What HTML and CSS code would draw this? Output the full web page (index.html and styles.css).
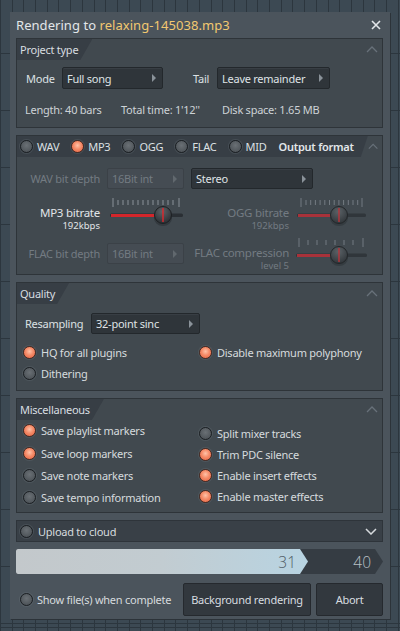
FILE: index.html
```html
<!DOCTYPE html>
<html>
<head>
<meta charset="utf-8">
<link rel="stylesheet" href="styles.css">
</head>
<body>
<div class="win">
  <div class="titlebar">
    <span class="title">Rendering to <span class="fname">relaxing-145038.mp3</span></span>
    <svg class="close" width="10" height="10" viewBox="0 0 10 10"><path d="M1 1L9 9M9 1L1 9" stroke="#e3e7ea" stroke-width="1.6" fill="none"/></svg>
  </div>

  <section class="panel p1">
    <div class="phead">
      <div class="tab">Project type</div>
      <svg class="caret" width="12" height="7" viewBox="0 0 12 7"><path d="M1 6L6 1L11 6" stroke="#68717a" stroke-width="1.3" fill="none"/></svg>
    </div>
    <div class="mode-row">
      <span class="lbl mode">Mode</span>
      <div class="dd dd-mode">Full song<i class="arr"></i></div>
      <span class="lbl tail">Tail</span>
      <div class="dd dd-tail">Leave remainder<i class="arr"></i></div>
    </div>
    <div class="info-row">
      <span class="i1">Length: 40 bars</span>
      <span class="i2">Total time: 1'12''</span>
      <span class="i3">Disk space: 1.65 MB</span>
    </div>
  </section>

  <section class="panel p2">
    <div class="phead">
      <div class="tab tab-wide">
        <span class="fmt"><i class="radio"></i>WAV</span>
        <span class="fmt"><i class="radio on"></i>MP3</span>
        <span class="fmt"><i class="radio"></i>OGG</span>
        <span class="fmt"><i class="radio"></i>FLAC</span>
        <span class="fmt"><i class="radio"></i>MID</span>
        <span class="fmt-title">Output format</span>
      </div>
      <svg class="caret" width="12" height="7" viewBox="0 0 12 7"><path d="M1 6L6 1L11 6" stroke="#68717a" stroke-width="1.3" fill="none"/></svg>
    </div>
    <div class="fgrid">
      <div class="flbl dis r1">WAV bit depth</div>
      <div class="dd dis r1 c2">16Bit int<i class="arr"></i></div>
      <div class="dd stereo r1">Stereo<i class="arr"></i></div>

      <div class="flbl two r2"><span class="big">MP3 bitrate</span><span class="small">192kbps</span></div>
      <div class="r2 c2 sl">
        <svg width="77" height="32" viewBox="0 0 77 32">
          <path d="M6 3V12M72 3V12M11 5V10M16 5V10M21 5V10M26 5V10M31 5V10M36 5V10M41 5V10M46 5V10M51 5V10M56 5V10M61 5V10M66 5V10" stroke="#8a9299" stroke-width="1"/>
          <rect x="3" y="18.5" width="73" height="3.5" rx="1.5" fill="#2a2f34"/>
          <rect x="4" y="19" width="48" height="3" fill="#d3262b"/>
          <ellipse cx="56" cy="23" rx="9" ry="8" fill="#2a2f33" opacity="0.6"/>
          <circle cx="56" cy="20" r="8.5" fill="url(#kn)" stroke="#1d2023" stroke-width="1"/>
          <path d="M56 13V27" stroke="#e0262c" stroke-width="1.4"/>
          <defs><radialGradient id="kn" cx="0.45" cy="0.3" r="0.8"><stop offset="0" stop-color="#5c6368"/><stop offset="1" stop-color="#24282c"/></radialGradient></defs>
        </svg>
      </div>
      <div class="flbl two dis r2 c3"><span class="big">OGG bitrate</span><span class="small">192kbps</span></div>
      <div class="r2 c4 sl">
        <svg width="71" height="32" viewBox="0 0 71 32">
          <path d="M5 3V12M66 3V12M10 5V10M14.7 5V10M19.4 5V10M24.1 5V10M28.8 5V10M33.5 5V10M38.2 5V10M42.9 5V10M47.6 5V10M52.3 5V10M57 5V10M61.7 5V10" stroke="#737b82" stroke-width="1"/>
          <rect x="1" y="18.5" width="69" height="3.5" rx="1.5" fill="#30363b"/>
          <rect x="2" y="19" width="37" height="3" fill="#a8323a"/>
          <ellipse cx="43" cy="23" rx="9" ry="8" fill="#2a2f33" opacity="0.5"/>
          <circle cx="43" cy="20" r="8.5" fill="url(#kn2)" stroke="#23272a" stroke-width="1"/>
          <path d="M43 13V27" stroke="#b8343b" stroke-width="1.4"/>
          <defs><radialGradient id="kn2" cx="0.45" cy="0.3" r="0.8"><stop offset="0" stop-color="#5b6267"/><stop offset="1" stop-color="#2b3034"/></radialGradient></defs>
        </svg>
      </div>

      <div class="flbl dis r3">FLAC bit depth</div>
      <div class="dd dis r3 c2">16Bit int<i class="arr"></i></div>
      <div class="flbl two dis r3 c3 cmp"><span class="big">FLAC compression</span><span class="small">level 5</span></div>
      <div class="r3 c4 sl sl3">
        <svg width="71" height="32" viewBox="0 0 71 32">
          <path d="M3 3V12M67 3V12M12 5V10M21 5V10M30 5V10M39 5V10M48 5V10M57 5V10" stroke="#737b82" stroke-width="1"/>
          <rect x="0" y="18.5" width="71" height="3.5" rx="1.5" fill="#30363b"/>
          <rect x="1" y="19" width="38" height="3" fill="#a8323a"/>
          <ellipse cx="43" cy="23" rx="9" ry="8" fill="#2a2f33" opacity="0.5"/>
          <circle cx="43" cy="20" r="8.5" fill="url(#kn3)" stroke="#23272a" stroke-width="1"/>
          <path d="M43 13V27" stroke="#b8343b" stroke-width="1.4"/>
          <defs><radialGradient id="kn3" cx="0.45" cy="0.3" r="0.8"><stop offset="0" stop-color="#5b6267"/><stop offset="1" stop-color="#2b3034"/></radialGradient></defs>
        </svg>
      </div>
    </div>
  </section>

  <section class="panel p3">
    <div class="phead">
      <div class="tab">Quality</div>
      <svg class="caret" width="12" height="7" viewBox="0 0 12 7"><path d="M1 6L6 1L11 6" stroke="#68717a" stroke-width="1.3" fill="none"/></svg>
    </div>
    <div class="res-row">
      <span class="lbl res">Resampling</span>
      <div class="dd dd-res">32-point sinc<i class="arr"></i></div>
    </div>
    <div class="opts q">
      <span class="opt"><i class="radio on"></i>HQ for all plugins</span>
      <span class="opt"><i class="radio on"></i>Disable maximum polyphony</span>
      <span class="opt"><i class="radio"></i>Dithering</span>
    </div>
  </section>

  <section class="panel p4">
    <div class="phead">
      <div class="tab">Miscellaneous</div>
      <svg class="caret" width="12" height="7" viewBox="0 0 12 7"><path d="M1 6L6 1L11 6" stroke="#68717a" stroke-width="1.3" fill="none"/></svg>
    </div>
    <div class="misc">
      <div class="col left">
        <span class="opt"><i class="radio on"></i>Save playlist markers</span>
        <span class="opt"><i class="radio on"></i>Save loop markers</span>
        <span class="opt"><i class="radio"></i>Save note markers</span>
        <span class="opt"><i class="radio"></i>Save tempo information</span>
      </div>
      <div class="col right">
        <span class="opt"><i class="radio"></i>Split mixer tracks</span>
        <span class="opt"><i class="radio on"></i>Trim PDC silence</span>
        <span class="opt"><i class="radio on"></i>Enable insert effects</span>
        <span class="opt"><i class="radio on"></i>Enable master effects</span>
      </div>
    </div>
  </section>

  <div class="cloud">
    <span class="opt"><i class="radio"></i>Upload to cloud</span>
    <svg class="chev" width="12" height="7" viewBox="0 0 12 7"><path d="M1 1L6 6L11 1" stroke="#d6dadd" stroke-width="1.5" fill="none"/></svg>
  </div>

  <div class="progress">
    <div class="fill"><span>31</span></div>
    <span class="total">40</span>
  </div>

  <div class="bottom">
    <span class="opt show"><i class="radio"></i>Show file(s) when complete</span>
    <div class="btn bg">Background rendering</div>
    <div class="btn abort">Abort</div>
  </div>
</div>
</body>
</html>
```

FILE: styles.css
```css
* { box-sizing: border-box; }
html, body { margin: 0; padding: 0; }
body {
  width: 400px;
  height: 631px;
  overflow: hidden;
  font-family: "Noto Sans", "DejaVu Sans", sans-serif;
  font-size: 11px;
  letter-spacing: -0.25px;
  color: #d6dbde;
  background-color: #3c4953;
  background-image:
    repeating-linear-gradient(90deg, #2c363e 0 1px, transparent 1px 11.7px),
    repeating-linear-gradient(180deg, #2c363e 0 1px, transparent 1px 57px);
  background-position: 0 0, 0 -4px;
  padding-top: 12px;
  padding-left: 10px;
}
.win {
  width: 380px;
  height: 607px;
  background: #4b545c;
  box-shadow: 1px 1px 0 #2c3339;
  padding: 0 7px 0 6px;
}
.titlebar {
  height: 26px;
  display: flex;
  align-items: center;
  justify-content: space-between;
}
.title { font-size: 13px; color: #e2e6e9; letter-spacing: 0.05px; }
.fname { color: #f2c870; }
.close { margin-right: 2px; }

.panel {
  background: #41494f;
  border: 1px solid #2e3439;
  margin-bottom: 7px;
}
.phead {
  height: 21px;
  display: flex;
  align-items: center;
  justify-content: space-between;
}
.tab {
  height: 21px;
  background: #373e45;
  display: flex;
  align-items: center;
  padding: 0 14px 0 3px;
  color: #d8dde0;
  clip-path: polygon(0 0, 100% 0, calc(100% - 12px) 100%, 0 100%);
}
.caret { margin-right: 4px; }

.p1 { height: 90px; }
.lbl { color: #dde1e4; }
.mode-row {
  display: flex;
  align-items: center;
  height: 22px;
  margin-top: 7px;
  padding-left: 9px;
}
.mode { width: 36px; }
.dd {
  height: 22px;
  background: #2f353a;
  border: 1px solid #23282c;
  border-radius: 2px;
  display: flex;
  align-items: center;
  justify-content: space-between;
  padding: 0 6px 0 4px;
  color: #dfe3e6;
  box-shadow: inset 0 1px 0 #383e44;
}
.arr {
  width: 0; height: 0;
  border-left: 4px solid #8a9299;
  border-top: 4px solid transparent;
  border-bottom: 4px solid transparent;
}
.dd-mode { width: 101px; }
.tail { margin-left: 30px; width: 24px; }
.dd-tail { width: 113px; }
.info-row {
  height: 16px;
  margin-top: 12px;
  display: flex;
  align-items: center;
  color: #cdd2d6;
  padding-left: 8px;
}
.i1 { width: 96px; }
.i2 { width: 101px; }

.p2 { height: 140px; }
.tab-wide {
  width: 355px;
  padding-left: 3px;
  gap: 12px;
  clip-path: polygon(0 0, 100% 0, calc(100% - 7px) 100%, 0 100%);
}
.fmt { display: flex; align-items: center; gap: 4px; color: #dce0e3; }
.fmt-title { font-weight: 600; color: #e3e7ea; white-space: nowrap; }

.radio {
  display: inline-block;
  width: 13px;
  height: 13px;
  border-radius: 50%;
  border: 1px solid #1c2024;
  background: radial-gradient(circle at 50% 40%, #6a7075 0, #50565b 70%, #464c51 100%);
  box-shadow: 0 0 0 1px rgba(120,128,134,0.25);
  flex: none;
}
.radio.on {
  border-color: #4a2a22;
  background: radial-gradient(circle at 50% 40%, #ffc2a8 0, #f58b68 45%, #e2603f 100%);
}

.fgrid {
  display: grid;
  grid-template-columns: 83px 77px 98px 71px;
  grid-template-rows: 21px 42px 28px;
  column-gap: 7px;
  row-gap: 6px;
  margin-top: 11px;
}
.r1 { grid-row: 1; }
.r2 { grid-row: 2; }
.r3 { grid-row: 3; }
.c2 { grid-column: 2; }
.c3 { grid-column: 3; }
.c4 { grid-column: 4; }
.flbl {
  grid-column: 1;
  text-align: right;
  color: #e1e5e8;
  display: flex;
  align-items: center;
  justify-content: flex-end;
  height: 21px;
  white-space: nowrap;
}
.flbl.c3 { grid-column: 3; }
.flbl.dis, .dd.dis { color: #737b82; }
.dd.dis {
  background: #454c53;
  border-color: #3b4147;
  box-shadow: none;
  height: 21px;
}
.dd.dis .arr { border-left-color: #61686e; }
.stereo { grid-column: 3 / span 2; width: 122px; height: 21px; }
.flbl.two {
  flex-direction: column;
  align-items: flex-end;
  justify-content: flex-start;
  height: auto;
  padding-top: 11px;
}
.flbl.two .big { line-height: 14px; font-size: 11.5px; }
.flbl.two .small { font-size: 9.5px; line-height: 12px; letter-spacing: 0; }
.flbl.cmp { padding-top: 3px; }
.sl svg { display: block; }
.sl3 { margin-top: -8px; }

.p3 { height: 109px; }
.res-row {
  display: flex;
  align-items: center;
  height: 21px;
  margin-top: 9px;
  padding-left: 8px;
}
.res { width: 66px; }
.dd-res { width: 109px; height: 21px; }
.opt { display: flex; align-items: center; gap: 5px; color: #d6dbde; white-space: nowrap; }
.opts.q {
  display: grid;
  grid-template-columns: 176px auto;
  grid-auto-rows: 21px;
  margin-top: 8px;
  padding-left: 6px;
}

.p4 { height: 115px; }
.misc {
  display: flex;
  padding-left: 6px;
  margin-top: -1px;
}
.col { display: flex; flex-direction: column; }
.col.left { width: 176px; }
.col.left .opt:nth-child(1) { height: 22px; }
.col.left .opt:nth-child(2) { height: 24px; }
.col.left .opt:nth-child(3) { height: 21px; }
.col.left .opt:nth-child(4) { height: 22px; }
.col.right { padding-top: 4px; }
.col.right .opt { height: 21px; }

.cloud {
  height: 22px;
  background: #394047;
  border: 1px solid #2e343a;
  display: flex;
  align-items: center;
  justify-content: space-between;
  padding-left: 3px;
  padding-right: 5px;
}

.progress {
  margin-top: 7px;
  height: 25px;
  width: 367px;
  background: #353c43;
  clip-path: polygon(0 0, calc(100% - 8px) 0, 100% 50%, calc(100% - 8px) 100%, 0 100%);
  display: flex;
  align-items: center;
  justify-content: space-between;
}
.fill {
  height: 25px;
  width: 292px;
  background: linear-gradient(90deg, #c3c8cb 0%, #c2ccd1 50%, #b8d4e2 100%);
  clip-path: polygon(0 0, calc(100% - 8px) 0, 100% 50%, calc(100% - 8px) 100%, 0 100%);
  display: flex;
  align-items: center;
  justify-content: flex-end;
  padding-right: 12px;
  border-radius: 2px 0 0 2px;
}
.fill span, .total { font-size: 15.5px; font-weight: 300; letter-spacing: 0; font-family: "Open Sans", "Noto Sans", sans-serif; }
.fill span { color: #4f5a64; }
.total { color: #b9c0c5; margin-right: 12px; }

.bottom {
  display: flex;
  align-items: center;
  margin-top: 9px;
  height: 33px;
}
.show { margin-left: 4px; gap: 4px; width: 163px; }
.btn {
  height: 33px;
  background: #32383e;
  border: 1px solid #25292e;
  border-radius: 2px;
  display: flex;
  align-items: center;
  justify-content: center;
  color: #d8dde0;
}
.bg { width: 128px; }
.abort { width: 67px; margin-left: 5px; }
```
